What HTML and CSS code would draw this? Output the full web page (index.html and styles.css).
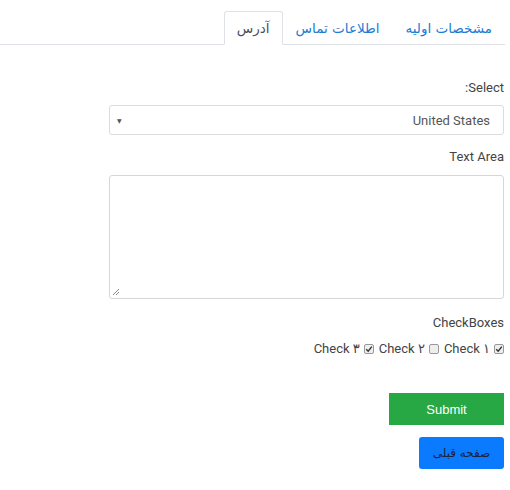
FILE: index.html
```html
<!DOCTYPE html>
<html lang="fa" dir="rtl">
<head>
<meta charset="utf-8">
<link rel="stylesheet" href="styles.css">
</head>
<body>
<div class="page">
  <ul class="tabs">
    <li class="tab"><a class="tab-link">مشخصات اولیه</a></li>
    <li class="tab"><a class="tab-link">اطلاعات تماس</a></li>
    <li class="tab"><a class="tab-link active">آدرس</a></li>
  </ul>
  <form class="form">
    <div class="label">Select:</div>
    <div class="select">
      <span class="select-value">United States</span>
      <span class="select-arrow">▼</span>
    </div>
    <div class="label label-ta">Text Area</div>
    <div class="textarea">
      <svg class="grip" width="8" height="8" viewBox="0 0 8 8"><path d="M7 1 L1 7 M7 4 L4 7" stroke="#888" stroke-width="1"/></svg>
    </div>
    <div class="label label-cb">CheckBoxes</div>
    <div class="checks">
      <label class="check"><span class="box"><svg width="8" height="8" viewBox="0 0 8 8"><path d="M1.2 4.2 L3.2 6.2 L6.8 1.6" fill="none" stroke="#333" stroke-width="1.4"/></svg></span><span dir="ltr">Check ۱</span></label>
      <label class="check"><span class="box"></span><span dir="ltr">Check ۲</span></label>
      <label class="check"><span class="box"><svg width="8" height="8" viewBox="0 0 8 8"><path d="M1.2 4.2 L3.2 6.2 L6.8 1.6" fill="none" stroke="#333" stroke-width="1.4"/></svg></span><span dir="ltr">Check ۳</span></label>
    </div>
    <div class="actions">
      <button type="button" class="btn btn-submit">Submit</button>
      <button type="button" class="btn btn-prev">صفحه قبلی</button>
    </div>
  </form>
</div>
</body>
</html>
```
FILE: styles.css
```css
html, body {
  margin: 0;
  padding: 0;
  background: #fff;
}
body {
  font-family: Roboto, "DejaVu Sans", sans-serif;
  font-size: 13px;
  color: #444;
}
.page {
  padding: 11px 5px 0 0;
}
.tabs {
  list-style: none;
  margin: 0;
  padding: 0;
  display: flex;
  border-bottom: 1px solid #dee2e6;
  height: 33px;
}
.tab {
  margin-bottom: -1px;
}
.tab-link {
  display: block;
  height: 32px;
  box-sizing: border-box;
  padding: 0 12px;
  line-height: 32px;
  color: #1c7cd5;
  font-family: "DejaVu Sans", sans-serif;
  font-size: 13.5px;
  border: 1px solid transparent;
  border-radius: 3px 3px 0 0;
}
.tab-link.active {
  color: #495057;
  background: #fff;
  border-color: #dee2e6 #dee2e6 #fff;
  height: 34px;
}
.form {
  width: 395px;
  margin-right: 1px;
  padding-top: 34px;
  display: flex;
  flex-direction: column;
  align-items: stretch;
}
.label {
  line-height: 18px;
  color: #444;
}
.select {
  margin-top: 8px;
  height: 30px;
  box-sizing: border-box;
  border: 1px solid #dcdcdc;
  border-radius: 3px;
  display: flex;
  align-items: center;
  justify-content: space-between;
  padding: 0 13px 0 7px;
  color: #555;
}
.select-arrow {
  font-size: 6px;
  color: #555;
}
.label-ta {
  margin-top: 13px;
}
.textarea {
  margin-top: 9px;
  height: 124px;
  box-sizing: border-box;
  border: 1px solid #d6d6d6;
  border-radius: 3px;
  display: flex;
  align-items: flex-end;
  justify-content: flex-end;
  padding: 0 0 2px 2px;
}
.label-cb {
  margin-top: 15px;
}
.checks {
  margin-top: 8px;
  display: flex;
  gap: 5px;
  line-height: 18px;
  color: #444;
}
.check {
  display: flex;
  align-items: center;
  gap: 4px;
}
.box {
  width: 10px;
  height: 10px;
  box-sizing: border-box;
  border: 1px solid #999;
  border-radius: 2px;
  background: #eee;
  display: flex;
  align-items: center;
  justify-content: center;
}
.actions {
  margin-top: 35px;
  display: flex;
  flex-direction: column;
  align-items: flex-start;
  gap: 12px;
}
.btn {
  height: 32px;
  border: none;
  font-size: 13px;
  cursor: pointer;
}
.btn-submit {
  width: 115px;
  background: #28a745;
  color: #fff;
  font-family: "Liberation Sans", Arial, sans-serif;
  border-radius: 0;
}
.btn-prev {
  width: 85px;
  background: #0a7bff;
  color: #1a2240;
  font-family: "DejaVu Sans", sans-serif;
  font-size: 12px;
  border-radius: 3px;
}
```
